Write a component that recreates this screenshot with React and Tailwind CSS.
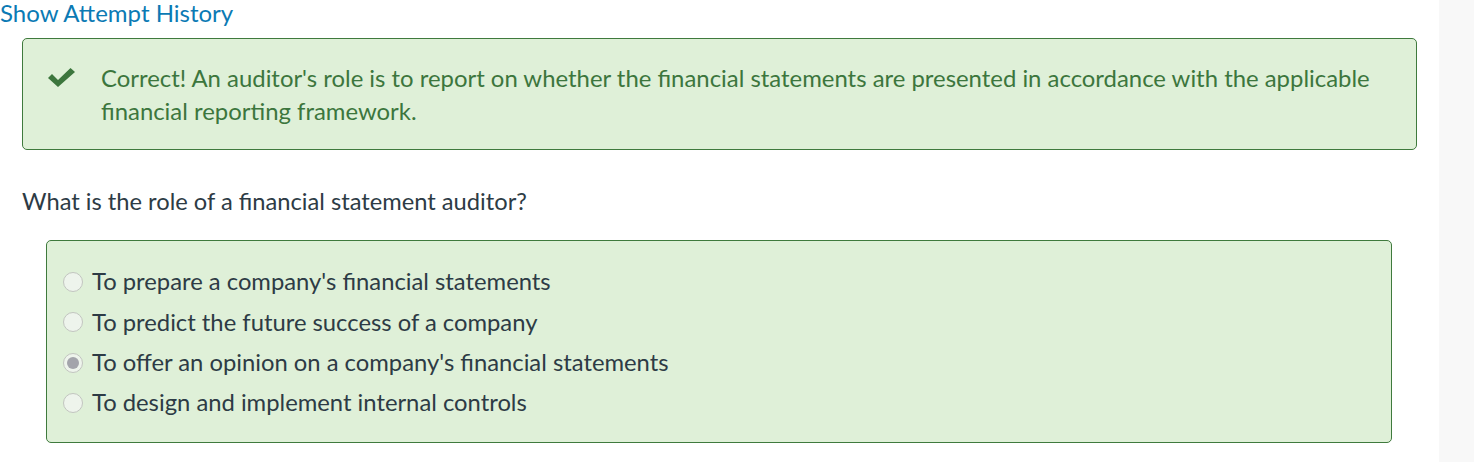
import React from "react";

const options = [
  { text: "To prepare a company's financial statements", selected: false },
  { text: "To predict the future success of a company", selected: false },
  { text: "To offer an opinion on a company's financial statements", selected: true },
  { text: "To design and implement internal controls", selected: false },
];

function Radio({ selected }) {
  return (
    <span className="flex h-[20px] w-[20px] shrink-0 items-center justify-center rounded-full border-[1.5px] border-[#c2c5c0] bg-[#eef4ec]">
      {selected && <span className="h-[12px] w-[12px] rounded-full bg-[#a3a4ab]" />}
    </span>
  );
}

export default function App() {
  return (
    <div className="flex h-[462px] w-[1474px] bg-white" style={{ fontFamily: "Lato, 'Open Sans', sans-serif" }}>
      <div className="w-[1439px] shrink-0">
        <a className="block text-[24px] leading-[26px] text-[#0b7ab4]">Show Attempt History</a>
        <div className="ml-[22px] mt-[12px] flex w-[1395px] rounded-[5px] border border-[#3f7a3d] bg-[#dff0d8] pb-[22px] pl-[24px] pr-[20px] pt-[22px]">
          <svg className="mt-[7px] h-[19px] w-[29px] shrink-0" viewBox="0 0 29 19">
            <path d="M1 10 L5 6 L11 12 L23.5 0 L28 4 L11 19 Z" fill="#3c763d" />
          </svg>
          <p className="ml-[25px] text-[23.9px] leading-[33px] text-[#3c763d]">
            Correct! An auditor's role is to report on whether the financial statements are presented in accordance with the applicable financial reporting framework.
          </p>
        </div>
        <p className="ml-[22px] mt-[35px] text-[23.7px] leading-[33px] text-[#2d3b45]">What is the role of a financial statement auditor?</p>
        <div className="ml-[46px] mt-[22px] flex w-[1346px] flex-col rounded-[5px] border border-[#3f7a3d] bg-[#dff0d8] pb-[19px] pl-[16px] pt-[21px]">
          {options.map((o) => (
            <label key={o.text} className="flex h-[40.33px] items-center gap-[9px] text-[23.8px] text-[#2d3b45]">
              <Radio selected={o.selected} />
              <span>{o.text}</span>
            </label>
          ))}
        </div>
      </div>
      <div className="flex-1 bg-[#f8f8f8]" />
    </div>
  );
}
